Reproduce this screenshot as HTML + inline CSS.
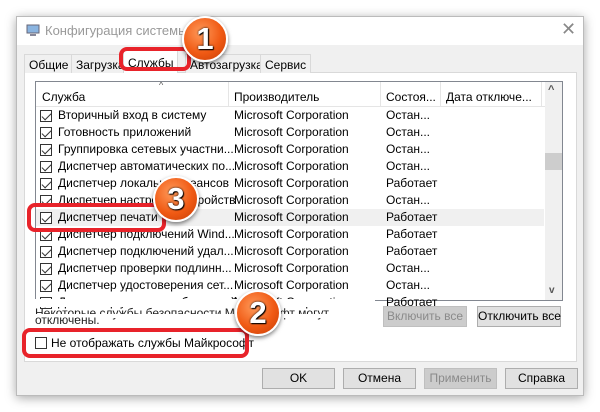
<!DOCTYPE html><html><head><meta charset="utf-8"><style>
*{margin:0;padding:0;box-sizing:border-box}
body{width:600px;height:412px;background:#fff;font-family:"Liberation Sans","DejaVu Sans",sans-serif;font-size:12px;color:#000;position:relative;overflow:hidden}
.a{position:absolute;white-space:nowrap}
.win{left:16px;top:16px;width:568px;height:380px;background:#f0f0f0;box-shadow:0 2px 10px rgba(0,0,0,.35);border:1px solid #bbb}
.title{left:0;top:0;width:566px;height:28px;background:#fff}
.tab{top:37px;height:19px;border:1px solid #d9d9d9;border-bottom:none;background:#f0f0f0;padding:3px 4px;font-size:12px}
.cb{width:12px;height:12px;border:1px solid #333;background:#fff}
.cb.c::after{content:"";position:absolute;left:3px;top:0px;width:4px;height:8px;border:solid #333;border-width:0 1.5px 1.5px 0;transform:rotate(45deg)}
.btn{height:21px;border:1px solid #adadad;background:#e1e1e1;text-align:center;line-height:19px;font-size:12px}
.badge{width:46px;height:46px;border-radius:50%;background:radial-gradient(circle at 40% 35%,#ff9a5a,#f05a14 55%,#c63c05);border:2px solid #fff;box-shadow:0 2px 4px rgba(0,0,0,.5);color:#fff;font-weight:bold;font-size:31px;text-align:center;line-height:42px;text-shadow:0 0 2px #000,1px 1px 1px #000}
.red{border:4px solid #e8232a;border-radius:8px}
</style></head><body>
<div class="a win">
 <div class="a title"></div>
 <svg class="a" style="left:9px;top:7px" width="14" height="13"><rect x="1" y="1" width="12" height="8" fill="#8ab4e0" stroke="#667" /><rect x="4" y="10" width="6" height="2" fill="#889"/></svg>
 <div class="a" style="left:28px;top:6px;font-size:13px;color:#999">Конфигурация системы</div>
 <div class="a" style="left:544px;top:2px;font-size:18px;color:#888">✕</div>
 <div class="a" style="left:7px;top:55px;width:553px;height:290px;background:#fff;border:1px solid #d9d9d9"></div>
 <div class="a tab" style="left:7px">Общие</div>
 <div class="a tab" style="left:54px">Загрузка</div>
 <div class="a tab" style="left:106px;top:33px;height:23px;background:#fff;padding-top:5px">Службы</div>
 <div class="a tab" style="left:168px">Автозагрузка</div>
 <div class="a tab" style="left:243px">Сервис</div>
</div>
<div class="a" style="left:35px;top:81px;width:528px;height:220px;border:1px solid #828790;background:#fff;overflow:hidden">
 <div class="a" style="left:0;top:0;width:510px;height:25px;border-bottom:1px solid #e5e5e5"></div>
 <div class="a" style="left:123px;top:-2px;font-size:9px;color:#555">^</div>
 <div class="a" style="left:6px;top:8px">Служба</div>
 <div class="a" style="left:192px;top:0;width:1px;height:25px;background:#e5e5e5"></div>
 <div class="a" style="left:198px;top:8px">Производитель</div>
 <div class="a" style="left:344px;top:0;width:1px;height:25px;background:#e5e5e5"></div>
 <div class="a" style="left:350px;top:8px">Состоя...</div>
 <div class="a" style="left:404px;top:0;width:1px;height:25px;background:#e5e5e5"></div>
 <div class="a" style="left:410px;top:8px">Дата отключе...</div>
 <div class="a" style="left:505px;top:0;width:1px;height:25px;background:#e5e5e5"></div>
 <div class="a" style="left:509px;top:0;width:18px;height:220px;background:#f0f0f0"></div>
 <div class="a" style="left:512px;top:2px;font-size:11px;color:#555;font-weight:bold">^</div>
 <div class="a" style="left:509px;top:71px;width:17px;height:17px;background:#cdcdcd"></div>
 <div class="a" style="left:513px;top:203px;font-size:10px;color:#555;font-weight:bold">v</div>
 <div class="a" style="left:0;top:127px;width:508px;height:17px;background:#f0f0f0"></div>
</div>
<div id="rows"></div>
<div class="a" style="left:35px;top:299px;width:340px;height:8px;background:#fff"></div>
<div class="a" style="left:35px;top:306px;font-size:12px;color:#222">Некоторые службы безопасности Майкрософт могут</div>
<div class="a" style="left:35px;top:314px;width:340px;height:4px;background:#fff"></div>
<div class="a" style="left:35px;top:313px;color:#222">отключены.</div>
<div class="a btn" style="left:383px;top:306px;width:84px;color:#8a8a8a;background:#ccc;border-color:#bfbfbf">Включить все</div>
<div class="a btn" style="left:477px;top:306px;width:84px">Отключить все</div>
<div class="a cb" style="left:35px;top:337px"></div>
<div class="a" style="left:51px;top:336px">Не отображать службы Майкрософт</div>
<div class="a btn" style="left:262px;top:368px;width:73px">OK</div>
<div class="a btn" style="left:343px;top:368px;width:73px">Отмена</div>
<div class="a btn" style="left:424px;top:368px;width:73px;color:#8a8a8a;background:#ccc;border-color:#bfbfbf">Применить</div>
<div class="a btn" style="left:505px;top:368px;width:73px">Справка</div>
<script>
var n=["Вторичный вход в систему","Готовность приложений","Группировка сетевых участни...","Диспетчер автоматических по...","Диспетчер локальных сеансов","Диспетчер настройки устройств","Диспетчер печати","Диспетчер подключений Wind...","Диспетчер подключений удал...","Диспетчер проверки подлинн...","Диспетчер удостоверения сет...","Диспетчер учетных веб-записей"];
var s=["Остан...","Остан...","Остан...","Остан...","Работает","Остан...","Работает","Работает","Работает","Остан...","Остан...","Работает"];
var h="";for(var i=0;i<12;i++){var y=108+i*17;h+='<div class="a cb c" style="left:40px;top:'+(y+2)+'px"></div><div class="a" style="left:58px;top:'+y+'px">'+n[i]+'</div><div class="a" style="left:234px;top:'+y+'px">Microsoft Corporation</div><div class="a" style="left:386px;top:'+y+'px">'+s[i]+'</div>';}
document.getElementById("rows").innerHTML=h;
</script>
<div class="a red" style="left:119px;top:47px;width:72px;height:24px"></div>
<div class="a red" style="left:27px;top:203px;width:139px;height:29px"></div>
<div class="a red" style="left:22px;top:328px;width:227px;height:30px"></div>
<div class="a badge" style="left:182px;top:16px">1</div>
<div class="a badge" style="left:153px;top:176px">3</div>
<div class="a badge" style="left:235px;top:290px">2</div>
</body></html>
